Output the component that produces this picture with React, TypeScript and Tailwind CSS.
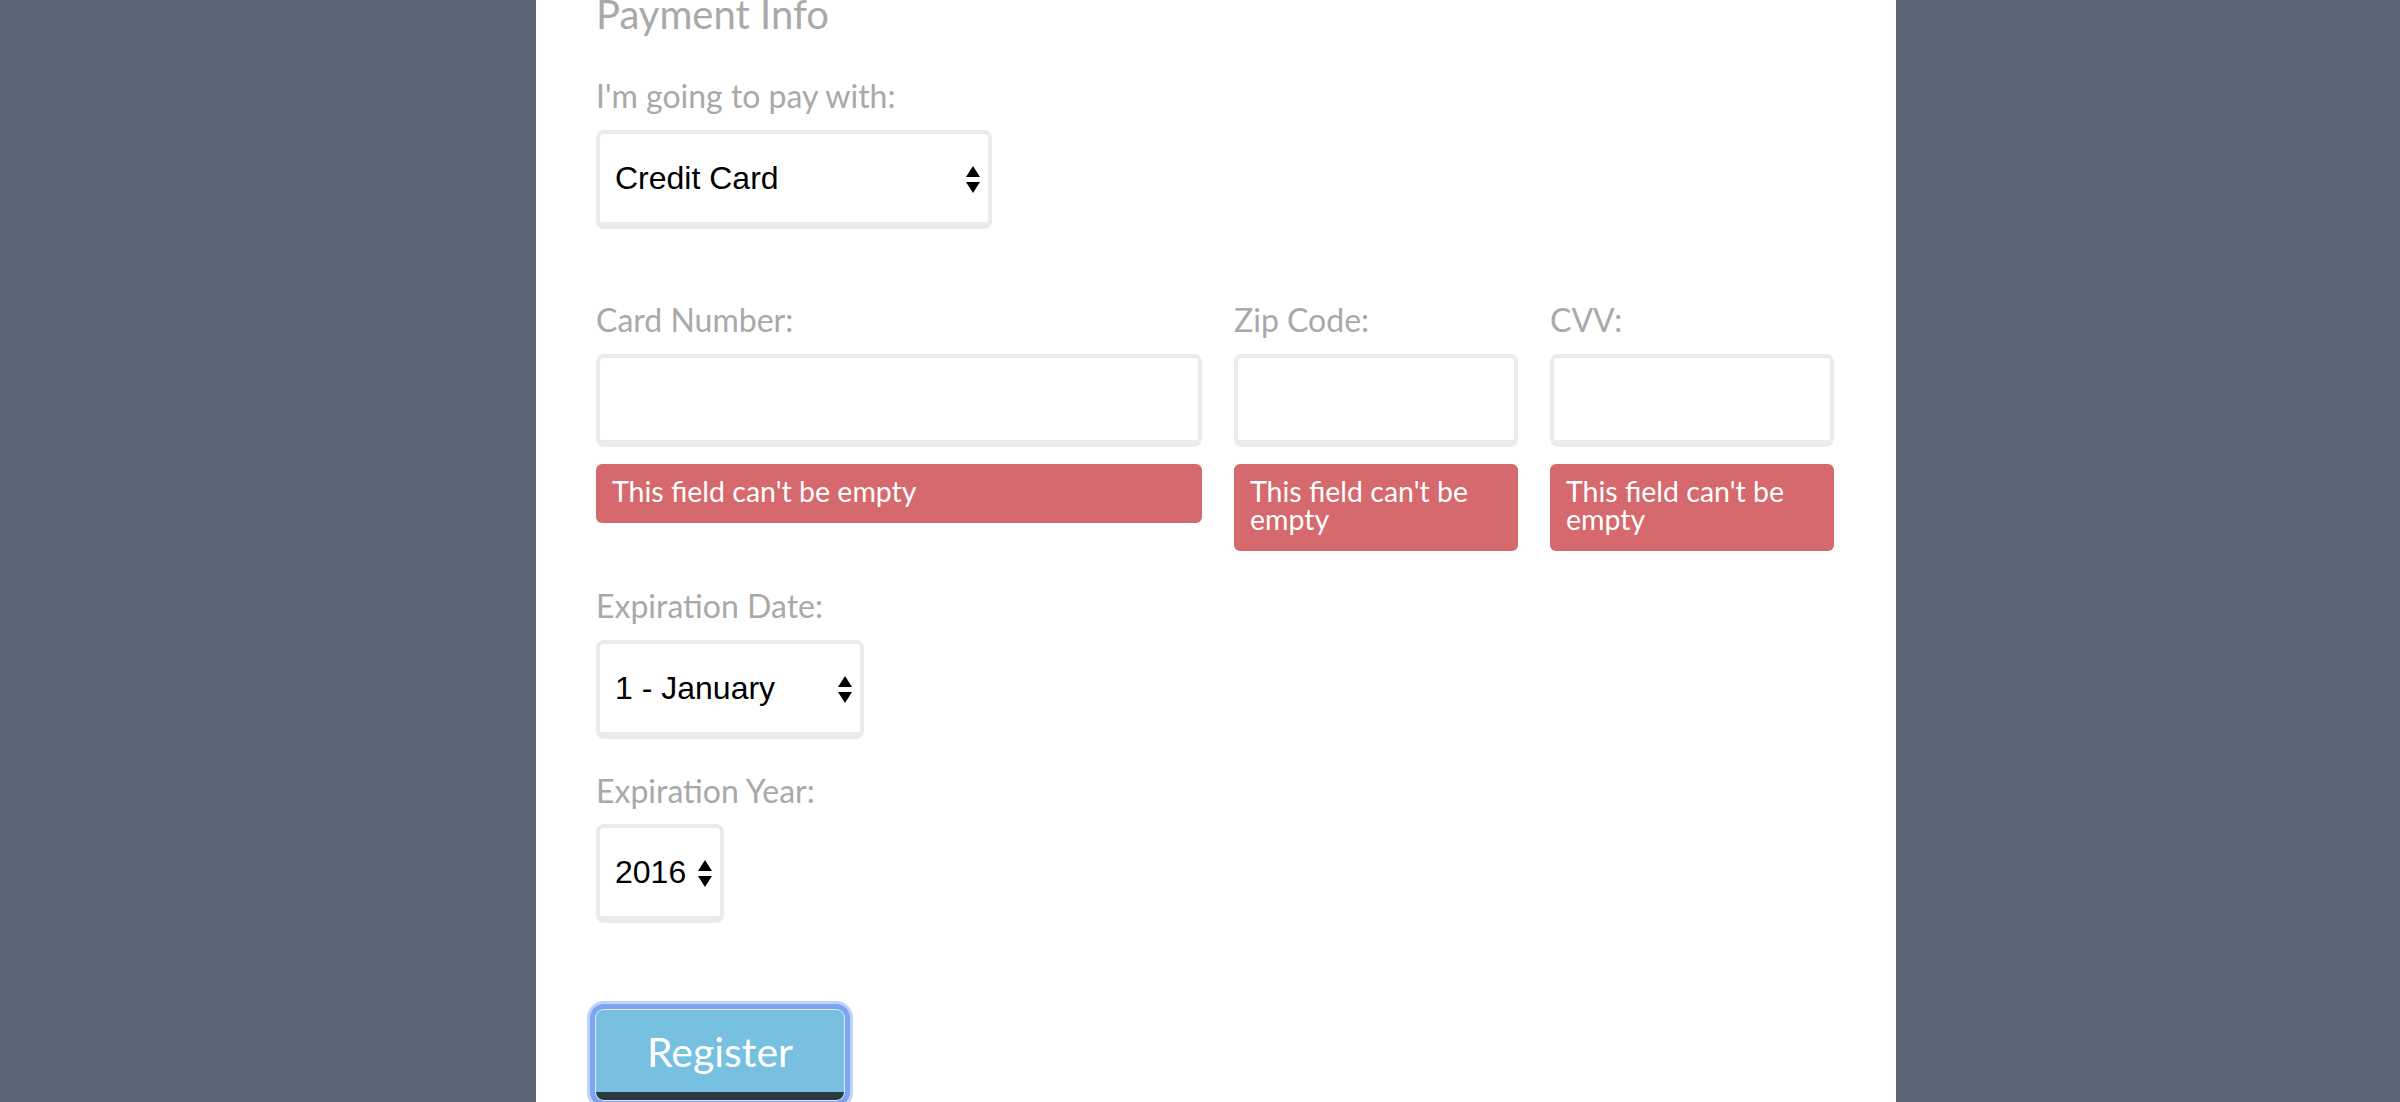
import React from "react";

function Arrows() {
  return (
    <svg width="14" height="28" viewBox="0 0 14 28" className="mt-[4px] shrink-0">
      <polygon points="7,0 14,11 0,11" fill="#000" />
      <polygon points="0,16 14,16 7,27" fill="#000" />
    </svg>
  );
}

function Select({ value, width }: { value: string; width: string }) {
  return (
    <div
      className={`${width} h-[99px] rounded-[8px] border-[4px] border-b-[7px] border-[#ebebeb] bg-white flex items-center justify-between pl-[15px] pr-[8px]`}
    >
      <span className="font-['Liberation_Sans',Arial,sans-serif] text-[32px] text-black whitespace-nowrap">
        {value}
      </span>
      <Arrows />
    </div>
  );
}

function Field({ label }: { label: string }) {
  return (
    <div className="flex flex-col">
      <div className="h-[32px] text-[32px] leading-[32px] text-[#a9a9a9] whitespace-nowrap">{label}</div>
      <div className="mt-[18px] h-[93px] rounded-[8px] border-[4px] border-b-[7px] border-[#ebebeb] bg-white" />
      <div className="mt-[17px] rounded-[6px] bg-[#d6696d] px-[16px] pt-[13px] pb-[18px] text-[28.5px] leading-[28px] text-white">
        This field can't be empty
      </div>
    </div>
  );
}

export default function App() {
  return (
    <div className="h-[1102px] w-full overflow-hidden bg-[#5c6676]">
      <div className="ml-[536px] flex h-full w-[1360px] flex-col items-start bg-white px-[60px] font-['Lato',sans-serif]">
        <h2 className="-mt-[6px] h-[40px] text-[40px] leading-[40px] text-[#a9a9a9] whitespace-nowrap">Payment Info</h2>
        <div className="mt-[46px] h-[32px] text-[32px] leading-[32px] text-[#a9a9a9] whitespace-nowrap">
          I'm going to pay with:
        </div>
        <div className="mt-[18px]">
          <Select value="Credit Card" width="w-[396px]" />
        </div>

        <div className="mt-[75px] grid grid-cols-[606px_284px_284px] gap-x-[32px] items-start">
          <Field label="Card Number:" />
          <Field label="Zip Code:" />
          <Field label="CVV:" />
        </div>

        <div className="mt-[39px] h-[32px] text-[32px] leading-[32px] text-[#a9a9a9] whitespace-nowrap">Expiration Date:</div>
        <div className="mt-[18px]">
          <Select value="1 - January" width="w-[268px]" />
        </div>

        <div className="mt-[36px] h-[32px] text-[32px] leading-[32px] text-[#a9a9a9] whitespace-nowrap">Expiration Year:</div>
        <div className="mt-[17px]">
          <Select value="2016" width="w-[128px]" />
        </div>

        <div className="mt-[87px] shrink-0">
          <button
            type="button"
            className="flex h-[90px] w-[248px] items-center justify-center rounded-[8px] border-b-[8px] border-[#2c3a3e] bg-[#77c0e0] pt-[2px] text-[41px] text-white shadow-[0_0_0_1px_#dbe8fb,0_0_0_6px_#7da5f0,0_0_0_9px_#bed3f9]"
          >
            Register
          </button>
        </div>
      </div>
    </div>
  );
}
